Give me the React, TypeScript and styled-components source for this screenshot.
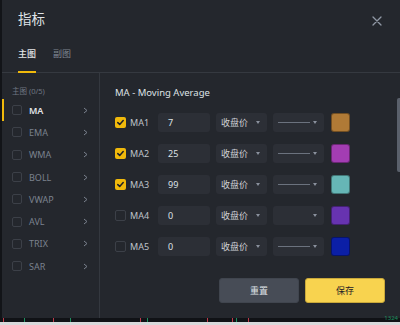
import React from 'react';
import styled, { createGlobalStyle } from 'styled-components';

const GlobalStyle = createGlobalStyle`
  html, body {
    margin: 0;
    padding: 0;
    background: #121418;
  }
  body {
    font-family: "Noto Sans", "Noto Sans CJK SC", sans-serif;
  }
`;

const YELLOW = '#f0b90b';

interface MaLine {
  id: string;
  period: string;
  checked: boolean;
  color: string;
  showLine: boolean;
}

const indicators = ['MA', 'EMA', 'WMA', 'BOLL', 'VWAP', 'AVL', 'TRIX', 'SAR'];

const maLines: MaLine[] = [
  { id: 'MA1', period: '7', checked: true, color: '#b07a36', showLine: true },
  { id: 'MA2', period: '25', checked: true, color: '#a33db3', showLine: true },
  { id: 'MA3', period: '99', checked: true, color: '#66b6b6', showLine: true },
  { id: 'MA4', period: '0', checked: false, color: '#6733b0', showLine: false },
  { id: 'MA5', period: '0', checked: false, color: '#0b1fa6', showLine: true },
];

// candle ticks peeking out from the chart below the dialog
const ticks = [
  { x: 3, c: '#c0394a' },
  { x: 24, c: '#1e8f5e' },
  { x: 53, c: '#c0394a' },
  { x: 70, c: '#1e8f5e' },
  { x: 140, c: '#c0394a' },
  { x: 147, c: '#1e8f5e' },
  { x: 207, c: '#c0394a' },
  { x: 232, c: '#c0394a' },
  { x: 236, c: '#1e8f5e' },
  { x: 248, c: '#c0394a' },
];

const App: React.FC = () => {
  return (
    <>
      <GlobalStyle />
      <Page>
        <Dialog>
          <Header>
            <Title>指标</Title>
            <CloseButton aria-label="close">
              <svg width="10" height="10" viewBox="0 0 10 10">
                <path d="M1 1L9 9M9 1L1 9" stroke="#9098a5" strokeWidth="1.3" strokeLinecap="round" />
              </svg>
            </CloseButton>
          </Header>

          <TabBar>
            <Tab $active>主图</Tab>
            <Tab>副图</Tab>
          </TabBar>

          <Body>
            <Sidebar>
              <SideCaption>主图 (0/5)</SideCaption>
              {indicators.map((name, i) => (
                <SideItem key={name} $active={i === 0}>
                  <SideBox />
                  <SideName $active={i === 0}>{name}</SideName>
                  <Chevron width="5" height="7" viewBox="0 0 5 7">
                    <path d="M1 1L4 3.5L1 6" stroke="#7b828e" strokeWidth="1" fill="none" />
                  </Chevron>
                </SideItem>
              ))}
            </Sidebar>

            <Content>
              <SectionTitle>MA - Moving Average</SectionTitle>
              <Rows>
                {maLines.map((line) => (
                  <Row key={line.id}>
                    <Check $checked={line.checked}>
                      {line.checked && (
                        <svg width="9" height="9" viewBox="0 0 9 9">
                          <path d="M1.8 4.6L3.7 6.4L7.2 2.6" stroke="#1e2026" strokeWidth="1.5" fill="none" strokeLinecap="round" strokeLinejoin="round" />
                        </svg>
                      )}
                    </Check>
                    <RowLabel>{line.id}</RowLabel>
                    <PeriodInput>{line.period}</PeriodInput>
                    <SelectBox>
                      <span>收盘价</span>
                      <Caret />
                    </SelectBox>
                    <SelectBox>
                      <LineSample $visible={line.showLine} />
                      <Caret />
                    </SelectBox>
                    <Swatch style={{ background: line.color }} />
                  </Row>
                ))}
              </Rows>
              <Actions>
                <Button>重置</Button>
                <Button $primary>保存</Button>
              </Actions>
            </Content>
            <ScrollThumb />
          </Body>
        </Dialog>

        <ChartStrip>
          <svg width="400" height="4" viewBox="0 0 400 4">
            {ticks.map((t) => (
              <rect key={t.x} x={t.x} y={0} width={1} height={4} fill={t.c} />
            ))}
          </svg>
          <PriceTag>1324</PriceTag>
        </ChartStrip>
        <Floor />
      </Page>
    </>
  );
};

const Page = styled.div`
  width: 400px;
  height: 325px;
  display: flex;
  flex-direction: column;
  background: #121418;
  overflow: hidden;
`;

const Dialog = styled.div`
  flex: 0 0 318px;
  margin-left: 2px;
  background: #24272d;
  display: flex;
  flex-direction: column;
`;

const Header = styled.div`
  height: 35px;
  padding: 0 18px 0 16px;
  display: flex;
  align-items: center;
  justify-content: space-between;
`;

const Title = styled.div`
  font-size: 13.5px;
  font-weight: 400;
  color: #dfe2e6;
  padding-top: 1px;
`;

const CloseButton = styled.div`
  width: 10px;
  height: 10px;
  display: flex;
  margin-top: 6px;
`;

const TabBar = styled.div`
  height: 37px;
  padding: 0 16px;
  display: flex;
  gap: 17px;
  border-bottom: 1px solid #353940;
`;

const Tab = styled.div<{ $active?: boolean }>`
  position: relative;
  padding-top: 13px;
  font-size: 9px;
  line-height: 11px;
  font-weight: ${({ $active }) => ($active ? 500 : 400)};
  color: ${({ $active }) => ($active ? '#e3e5e8' : '#7f8692')};

  &::after {
    content: '';
    position: absolute;
    left: 0;
    right: 0;
    bottom: -1px;
    height: 2px;
    background: ${({ $active }) => ($active ? YELLOW : 'transparent')};
  }
`;

const Body = styled.div`
  flex: 1;
  display: flex;
  position: relative;
`;

const Sidebar = styled.div`
  width: 97px;
  border-right: 1px solid #34383f;
  display: flex;
  flex-direction: column;
`;

const SideCaption = styled.div`
  margin: 13px 0 3px 10px;
  font-size: 7.5px;
  line-height: 10px;
  color: #6f7682;
`;

const SideItem = styled.div<{ $active?: boolean }>`
  position: relative;
  height: 22.3px;
  display: flex;
  align-items: center;
  padding: 0 11px 0 10px;

  &::before {
    content: '';
    position: absolute;
    left: 0;
    top: 0;
    bottom: 0;
    width: 2px;
    background: ${({ $active }) => ($active ? YELLOW : 'transparent')};
  }
`;

const SideBox = styled.div`
  width: 8px;
  height: 8px;
  border: 1px solid #3c4048;
  border-radius: 2px;
  margin-right: 7px;
`;

const SideName = styled.div<{ $active?: boolean }>`
  flex: 1;
  font-size: 9px;
  font-weight: ${({ $active }) => ($active ? 600 : 400)};
  color: ${({ $active }) => ($active ? '#e3e5e8' : '#7b828e')};
`;

const Chevron = styled.svg`
  display: block;
`;

const Content = styled.div`
  flex: 1;
  padding: 14px 15px 0 15px;
  display: flex;
  flex-direction: column;
`;

const SectionTitle = styled.div`
  font-size: 9.5px;
  line-height: 12px;
  font-weight: 400;
  color: #dfe2e6;
`;

const Rows = styled.div`
  margin-top: 14px;
  display: flex;
  flex-direction: column;
  gap: 12px;
`;

const Row = styled.div`
  height: 19px;
  display: flex;
  align-items: center;
`;

const Check = styled.div<{ $checked: boolean }>`
  width: 11px;
  height: 11px;
  box-sizing: border-box;
  border-radius: 2px;
  margin-right: 4px;
  display: flex;
  align-items: center;
  justify-content: center;
  background: ${({ $checked }) => ($checked ? YELLOW : 'transparent')};
  border: ${({ $checked }) => ($checked ? 'none' : '1px solid #3c4048')};
`;

const RowLabel = styled.div`
  width: 28px;
  font-size: 9px;
  font-weight: 400;
  color: #bfc3ca;
`;

const PeriodInput = styled.div`
  width: 52px;
  height: 19px;
  box-sizing: border-box;
  padding-left: 10px;
  border-radius: 3px;
  background: #2c2f36;
  display: flex;
  align-items: center;
  font-size: 9px;
  color: #dfe2e6;
  margin-right: 6px;
`;

const SelectBox = styled.div`
  width: 51px;
  height: 19px;
  box-sizing: border-box;
  padding: 0 7px 0 5px;
  border-radius: 3px;
  background: #2c2f36;
  display: flex;
  align-items: center;
  justify-content: space-between;
  font-size: 9px;
  color: #cfd2d7;
  margin-right: 6px;
`;

const Caret = styled.div`
  width: 0;
  height: 0;
  border-left: 2.5px solid transparent;
  border-right: 2.5px solid transparent;
  border-top: 3px solid #8a919d;
`;

const LineSample = styled.div<{ $visible: boolean }>`
  width: 32px;
  height: 1px;
  background: ${({ $visible }) => ($visible ? '#6b727e' : 'transparent')};
`;

const Swatch = styled.div`
  width: 19px;
  height: 19px;
  box-sizing: border-box;
  margin-left: 1px;
  border-radius: 3px;
  border: 1px solid rgba(0, 0, 0, 0.35);
`;

const Actions = styled.div`
  margin-top: 22px;
  display: flex;
  justify-content: flex-end;
  gap: 6px;
`;

const Button = styled.div<{ $primary?: boolean }>`
  width: 80px;
  height: 25px;
  border-radius: 3px;
  display: flex;
  align-items: center;
  justify-content: center;
  font-size: 9px;
  font-weight: 400;
  background: ${({ $primary }) => ($primary ? '#f8d34f' : '#474c56')};
  color: ${({ $primary }) => ($primary ? '#1e2026' : '#dfe2e6')};
  border: 1px solid ${({ $primary }) => ($primary ? '#c9a83a' : '#40454e')};
  box-sizing: border-box;
`;

const ScrollThumb = styled.div`
  position: absolute;
  right: 0;
  top: 25px;
  width: 3px;
  height: 74px;
  border-radius: 2px 0 0 2px;
  background: #5a606b;
`;

const ChartStrip = styled.div`
  position: relative;
  height: 4px;
  background: #101216;
  display: flex;
`;

const PriceTag = styled.div`
  position: absolute;
  right: 2px;
  top: -3px;
  font-size: 6px;
  line-height: 7px;
  color: #1e8f5e;
`;

const Floor = styled.div`
  flex: 1;
  background: #d8d9db;
`;

export default App;
